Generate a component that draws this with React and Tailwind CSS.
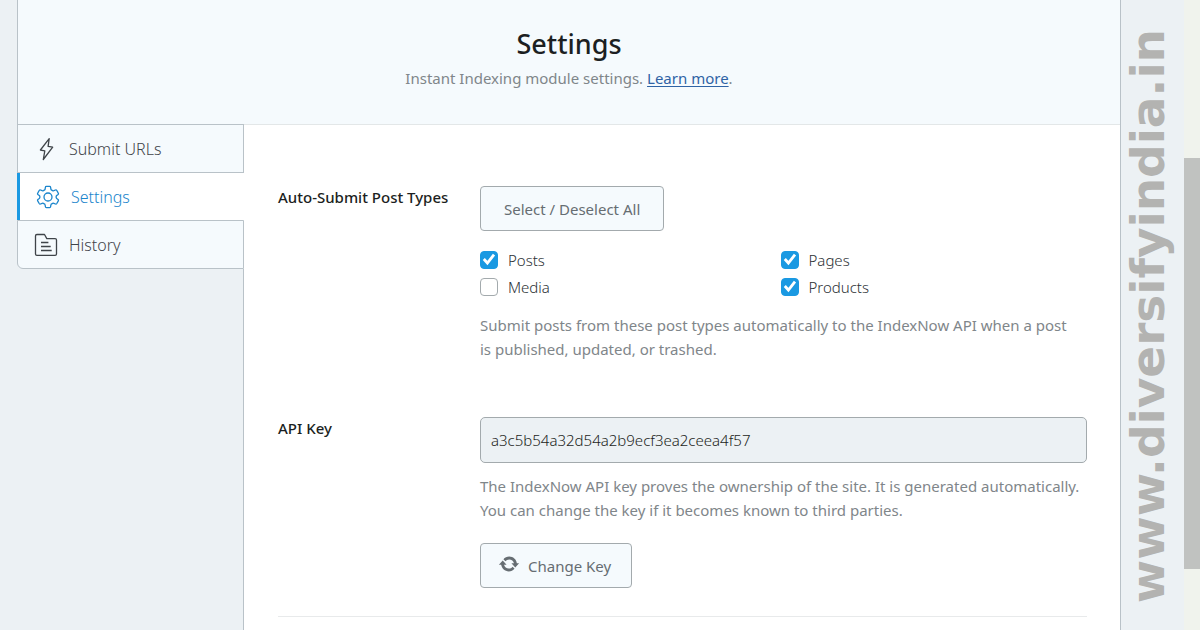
function BoltIcon() {
  return (
    <svg viewBox="0 0 24 24" className="h-6 w-6" fill="none" stroke="currentColor" strokeWidth="1.3" strokeLinejoin="round">
      <path d="M15.2 1.7 6.4 13l4.4.8-1.5 8.7L18.7 10.2l-4.6-.8z" />
    </svg>
  );
}

function GearIcon() {
  return (
    <svg viewBox="0 0 24 24" className="h-6 w-6" fill="none" stroke="currentColor" strokeWidth="1.3" strokeLinejoin="round">
      <circle cx="12" cy="12" r="4" />
      <path d="M10.4 1.4h3.2q.9 0 1 .9l.3 1.8q.1.7.8 1l.9.5q.6.3 1.2.1l1.7-.7q.8-.3 1.3.5l1.5 2.6q.5.8-.2 1.4l-1.4 1.1q-.6.5-.6 1.4t.6 1.4l1.4 1.1q.7.6.2 1.4l-1.5 2.6q-.5.8-1.3.5l-1.7-.7q-.6-.2-1.2.1l-.9.5q-.7.3-.8 1l-.3 1.8q-.1.9-1 .9h-3.2q-.9 0-1-.9l-.3-1.8q-.1-.7-.8-1l-.9-.5q-.6-.3-1.2-.1l-1.7.7q-.8.3-1.3-.5l-1.5-2.6q-.5-.8.2-1.4l1.4-1.1q.6-.5.6-1.4t-.6-1.4L1.9 9.5q-.7-.6-.2-1.4l1.5-2.6q.5-.8 1.3-.5l1.7.7q.6.2 1.2-.1l.9-.5q.7-.3.8-1l.3-1.8q.1-.9 1-.9z" />
    </svg>
  );
}

function FolderIcon() {
  return (
    <svg viewBox="0 0 24 24" className="h-6 w-6" fill="none" stroke="currentColor" strokeWidth="1.3" strokeLinejoin="round">
      <path d="M1.5 2.9c0-.8.6-1.4 1.4-1.4h7.6l2.3 4.1h8.3c.8 0 1.4.6 1.4 1.4v13.9c0 .8-.6 1.4-1.4 1.4H2.9c-.8 0-1.4-.6-1.4-1.4z" />
      <path d="M7 9.5h7.4M7 13.5h9.7M7 17.5h10.7" />
    </svg>
  );
}

function UpdateIcon() {
  return (
    <svg viewBox="0 0 20 20" className="mb-1 h-[22px] w-[22px]" fill="currentColor">
      <path d="M10.2 3.28c3.53 0 6.43 2.61 6.92 6h2.08l-3.5 4-3.5-4h2.32c-.45-1.97-2.21-3.45-4.32-3.45-1.45 0-2.73.71-3.54 1.78L4.95 5.66C6.23 4.2 8.11 3.28 10.2 3.28zM9.8 16.72c-3.52 0-6.43-2.61-6.92-6H.8l3.5-4 3.5 4H5.48c.45 1.97 2.21 3.45 4.32 3.45 1.45 0 2.73-.71 3.54-1.78l1.71 1.95C13.77 15.8 11.9 16.72 9.8 16.72z" />
    </svg>
  );
}

function PostType({ label, checked }) {
  return (
    <label className="flex items-center gap-[10px] font-light text-[#2c3135]">
      <span className="grid">
        <input
          type="checkbox"
          defaultChecked={checked}
          className="peer col-start-1 row-start-1 h-[18px] w-[18px] appearance-none rounded-[4px] border border-[#a3aaad] bg-white checked:border-[#1a99e2] checked:bg-[#1a99e2]"
        />
        <svg viewBox="0 0 18 18" className="pointer-events-none invisible col-start-1 row-start-1 h-[18px] w-[18px] peer-checked:visible" fill="none" stroke="#fff" strokeWidth="2.8">
          <path d="M3.8 8l3.6 4L14 3.6" />
        </svg>
      </span>
      {label}
    </label>
  );
}

const tab = "flex h-[49px] items-center gap-[11px] border border-[#b9c2c8] bg-[#f5fafd] pl-4 text-[#3f4449]";
const button = "flex h-[45px] items-center rounded-[4px] border border-[#a3aaad] bg-[#f5fafd] pt-px text-[#666d72]";
const help = "leading-6 text-[#7f868a]";

export default function App() {
  return (
    <div className="flex h-screen overflow-hidden bg-[#ecf1f4] font-['Noto_Sans','Open_Sans',sans-serif] text-[15px]">
      <main className="ml-[17px] flex flex-1 flex-col border-r border-[#b9c2c8]">
        <header className="flex h-[125px] shrink-0 flex-col items-center border-b border-l border-b-[#e3e7e8] border-l-[#b9c2c8] bg-[#f5fafd] pt-6">
          <h1 className="text-[27px] leading-10 font-medium text-[#1c1f22]">Settings</h1>
          <p className={`${help} mt-[2px]`}>
            Instant Indexing module settings.{" "}
            <a href="#learn" className="text-[#2f63a5] underline underline-offset-2">Learn more</a>.
          </p>
        </header>
        <div className="flex flex-1">
          <div className="-mt-px flex w-[227px] shrink-0 flex-col">
            <nav aria-label="Module" className="text-base font-light">
              <a href="#submit" className={tab}>
                <BoltIcon />
                Submit URLs
              </a>
              <a href="#settings" aria-current="page" className="flex h-[47px] items-center gap-[11px] border-l-[3px] border-[#1a99e2] bg-white pl-4 text-[#1a85cc]">
                <GearIcon />
                Settings
              </a>
              <a href="#history" className={`${tab} rounded-bl-[6px]`}>
                <FolderIcon />
                History
              </a>
            </nav>
            <div className="flex-1 border-r border-[#b9c2c8]" />
          </div>
          <section className="flex-1 bg-white pr-[33px] pl-[34px]">
            <div className="flex pt-[61px]">
              <h2 className="w-[202px] shrink-0 leading-[22px] font-medium text-[#1c1f22]">Auto-Submit Post Types</h2>
              <div className="min-w-0 flex-1">
                <button type="button" className={`${button} px-[23px]`}>Select / Deselect All</button>
                <div className="mt-[17px] grid grid-cols-2 gap-y-[3px] pr-[6px] leading-6">
                  <PostType label="Posts" checked />
                  <PostType label="Pages" checked />
                  <PostType label="Media" />
                  <PostType label="Products" checked />
                </div>
                <p className={`${help} mt-[14px] pr-2`}>
                  Submit posts from these post types automatically to the IndexNow API when a post is published, updated, or trashed.
                </p>
              </div>
            </div>
            <div className="mt-14 flex border-b border-[#e8eaeb] pb-7">
              <label htmlFor="api-key" className="w-[202px] shrink-0 leading-[22px] font-medium text-[#1c1f22]">API Key</label>
              <div className="min-w-0 flex-1">
                <input id="api-key" readOnly defaultValue="a3c5b54a32d54a2b9ecf3ea2ceea4f57" className="block h-[46px] w-full rounded-[5px] border border-[#a3aaad] bg-[#ecf1f4] px-[10px] font-light text-[#1c1f22]" />
                <p className={`${help} mt-[11px]`}>
                  The IndexNow API key proves the ownership of the site. It is generated automatically. You can change the key if it becomes known to third parties.
                </p>
                <button type="button" className={`${button} mt-[21px] gap-2 pr-5 pl-[17px]`}>
                  <UpdateIcon />
                  Change Key
                </button>
              </div>
            </div>
          </section>
        </div>
      </main>
      <aside className="flex w-[63px] shrink-0 items-center justify-center pt-[2px] pr-[10px]">
        <span className="font-['DejaVu_Sans',sans-serif] text-[47px] leading-none font-bold whitespace-nowrap text-[#b3b3b1] [writing-mode:sideways-lr]">
          www.diversifyindia.in
        </span>
      </aside>
      <div className="w-4 shrink-0 bg-[#f0f3ed] pt-[158px]">
        <div className="h-[411px] bg-[#c0c2c0]" />
      </div>
    </div>
  );
}
